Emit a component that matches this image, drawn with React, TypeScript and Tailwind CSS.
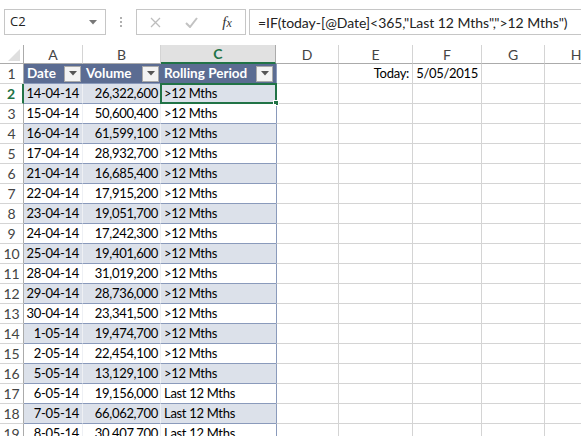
import React from 'react';

const rows: [string, string, string][] = [
  ['14-04-14', '26,322,600', '>12 Mths'],
  ['15-04-14', '50,600,400', '>12 Mths'],
  ['16-04-14', '61,599,100', '>12 Mths'],
  ['17-04-14', '28,932,700', '>12 Mths'],
  ['21-04-14', '16,685,400', '>12 Mths'],
  ['22-04-14', '17,915,200', '>12 Mths'],
  ['23-04-14', '19,051,700', '>12 Mths'],
  ['24-04-14', '17,242,300', '>12 Mths'],
  ['25-04-14', '19,401,600', '>12 Mths'],
  ['28-04-14', '31,019,200', '>12 Mths'],
  ['29-04-14', '28,736,000', '>12 Mths'],
  ['30-04-14', '23,341,500', '>12 Mths'],
  ['1-05-14', '19,474,700', '>12 Mths'],
  ['2-05-14', '22,454,100', '>12 Mths'],
  ['5-05-14', '13,129,100', '>12 Mths'],
  ['6-05-14', '19,156,000', 'Last 12 Mths'],
  ['7-05-14', '66,062,700', 'Last 12 Mths'],
  ['8-05-14', '30,407,700', 'Last 12 Mths'],
];

const cols = [
  { name: 'A', w: 'w-[59px]' },
  { name: 'B', w: 'w-[78px]' },
  { name: 'C', w: 'w-[115px]' },
  { name: 'D', w: 'w-[63px]' },
  { name: 'E', w: 'w-[74px]' },
  { name: 'F', w: 'w-[69px]' },
  { name: 'G', w: 'w-[63px]' },
  { name: 'H', w: 'w-[63px]' },
];

function FilterButton() {
  return (
    <div className="w-[17px] h-[16px] bg-[#f3f3f3] border border-[#a9a9a9] flex items-center justify-center shrink-0">
      <svg width="8" height="5" viewBox="0 0 8 5">
        <path d="M0 0 L8 0 L4 4.5 Z" fill="#555" />
      </svg>
    </div>
  );
}

function Gridcell({ w, children, className = '' }: { w: string; children?: React.ReactNode; className?: string }) {
  return (
    <div className={`${w} h-full shrink-0 border-r border-b border-[#d4d4d4] flex items-center px-[3px] pt-[1px] ${className}`}>
      {children}
    </div>
  );
}

export default function App() {
  return (
    <div className="w-[581px] h-[436px] overflow-hidden bg-white text-[13px] tracking-[-0.3px] text-black whitespace-nowrap font-['Lato','Liberation_Sans',sans-serif]">
      {/* formula bar */}
      <div className="h-[45px] flex items-start pt-[9px] pl-[4px] tracking-normal">
        <div className="w-[102px] h-[26px] border border-[#c6c6c6] flex items-center justify-between pl-[5px] pr-[8px] font-['Open_Sans',sans-serif] text-[13px] text-[#222]">
          <span>C2</span>
          <svg width="8" height="5" viewBox="0 0 8 5">
            <path d="M0 0 L8 0 L4 4.5 Z" fill="#777" />
          </svg>
        </div>
        <div className="w-[30px] h-[26px] flex flex-col items-center justify-center gap-[2px]">
          <span className="w-[2px] h-[2px] bg-[#b0b0b0]" />
          <span className="w-[2px] h-[2px] bg-[#b0b0b0]" />
          <span className="w-[2px] h-[2px] bg-[#b0b0b0]" />
        </div>
        <div className="w-[110px] h-[26px] border border-[#c6c6c6] flex items-center">
          <div className="w-[36px] flex justify-center">
            <svg width="11" height="11" viewBox="0 0 11 11">
              <path d="M1 1 L10 10 M10 1 L1 10" stroke="#bdbdbd" strokeWidth="1.3" />
            </svg>
          </div>
          <div className="w-[36px] flex justify-center">
            <svg width="13" height="11" viewBox="0 0 13 11">
              <path d="M1 6 L5 10 L12 1" stroke="#c2c2c2" strokeWidth="2" fill="none" />
            </svg>
          </div>
          <div className="w-[36px] flex justify-center font-['Liberation_Serif',serif] italic text-[15px] text-[#333]">
            <span>f<span className="text-[12px]">x</span></span>
          </div>
        </div>
        <div className="ml-[3px] flex-1 h-[26px] border border-[#c6c6c6] border-r-0 flex items-center pl-[8px] text-[14px] tracking-[-0.05px] text-[#222]">
          =IF(today-[@Date]&lt;365,"Last 12 Mths","&gt;12 Mths")
        </div>
      </div>

      {/* column headers */}
      <div className="flex h-[19px] text-[#444] text-[14px] tracking-normal">
        <div className="w-[24px] h-full shrink-0 border-r border-b border-[#ababab] relative">
          <svg className="absolute right-[3px] bottom-[2px]" width="12" height="12" viewBox="0 0 12 12">
            <path d="M12 0 L12 12 L0 12 Z" fill="#dfdfdf" />
          </svg>
        </div>
        {cols.map((c) =>
          c.name === 'C' ? (
            <div
              key={c.name}
              className={`${c.w} h-full shrink-0 bg-[#e1e1e1] border-r border-[#ababab] border-b-2 border-b-[#217346] flex items-center justify-center text-[#217346] font-bold`}
            >
              {c.name}
            </div>
          ) : (
            <div
              key={c.name}
              className={`${c.w} h-full shrink-0 border-r border-b border-[#d4d4d4] border-b-[#ababab] flex items-center justify-center`}
            >
              {c.name}
            </div>
          )
        )}
      </div>

      {/* row 1: table header */}
      <div className="flex h-[20px]">
        <div className="w-[24px] h-full shrink-0 border-r border-b border-[#d4d4d4] border-r-[#ababab] flex items-center justify-center text-[#444] text-[14px] tracking-normal">
          1
        </div>
        <div className="w-[59px] h-full shrink-0 bg-[#5b6c92] border-b border-[#8a9abb] flex items-center justify-between pl-[3px] pr-[2px] text-white font-bold text-[13.5px] tracking-normal">
          <span>Date</span>
          <FilterButton />
        </div>
        <div className="w-[78px] h-full shrink-0 bg-[#5b6c92] border-b border-[#8a9abb] flex items-center justify-between pl-[3px] pr-[2px] text-white font-bold text-[13.5px] tracking-normal">
          <span>Volume</span>
          <FilterButton />
        </div>
        <div className="w-[115px] h-full shrink-0 bg-[#5b6c92] border-b border-[#8a9abb] flex items-center justify-between pl-[3px] pr-[3px] text-white font-bold text-[13.5px] tracking-normal">
          <span>Rolling Period</span>
          <FilterButton />
        </div>
        <Gridcell w="w-[63px]" className="border-l border-l-[#8a9abb]" />
        <Gridcell w="w-[74px]" className="justify-end">
          Today:
        </Gridcell>
        <Gridcell w="w-[69px]" className="justify-end">
          5/05/2015
        </Gridcell>
        <Gridcell w="w-[63px]" />
        <Gridcell w="w-[63px]" />
      </div>

      {/* data rows */}
      {rows.map((r, i) => {
        const n = i + 2;
        const band = n % 2 === 0 ? 'bg-[#dce1ea]' : 'bg-white';
        const active = n === 2;
        return (
          <div key={n} className="flex h-[20px]">
            <div
              className={`w-[24px] h-full shrink-0 border-b border-[#d4d4d4] flex items-center justify-center text-[14px] tracking-normal ${
                active
                  ? 'border-r-2 border-r-[#217346] text-[#217346] font-bold'
                  : 'border-r border-r-[#ababab] text-[#444]'
              }`}
            >
              {n}
            </div>
            <div className={`w-[59px] h-full shrink-0 ${band} border-r border-b border-r-[#eef0f4] border-b-[#8a9abb] flex items-center justify-end px-[3px] pt-[1px]`}>
              {r[0]}
            </div>
            <div className={`w-[78px] h-full shrink-0 ${band} border-r border-b border-r-[#eef0f4] border-b-[#8a9abb] flex items-center justify-end px-[2px] pt-[1px]`}>
              {r[1]}
            </div>
            <div className={`w-[115px] h-full shrink-0 ${band} border-b border-b-[#8a9abb] relative flex items-center px-[3px] pt-[1px]`}>
              {r[2]}
              {active && (
                <div className="absolute -left-[1px] -top-[1px] -right-[1px] -bottom-[1px] border-2 border-[#217346]">
                  <div className="absolute -right-[4px] -bottom-[4px] w-[6px] h-[6px] bg-[#217346] border border-white" />
                </div>
              )}
            </div>
            <Gridcell w="w-[63px]" className="border-l border-l-[#8a9abb]" />
            <Gridcell w="w-[74px]" />
            <Gridcell w="w-[69px]" />
            <Gridcell w="w-[63px]" />
            <Gridcell w="w-[63px]" />
          </div>
        );
      })}
    </div>
  );
}
